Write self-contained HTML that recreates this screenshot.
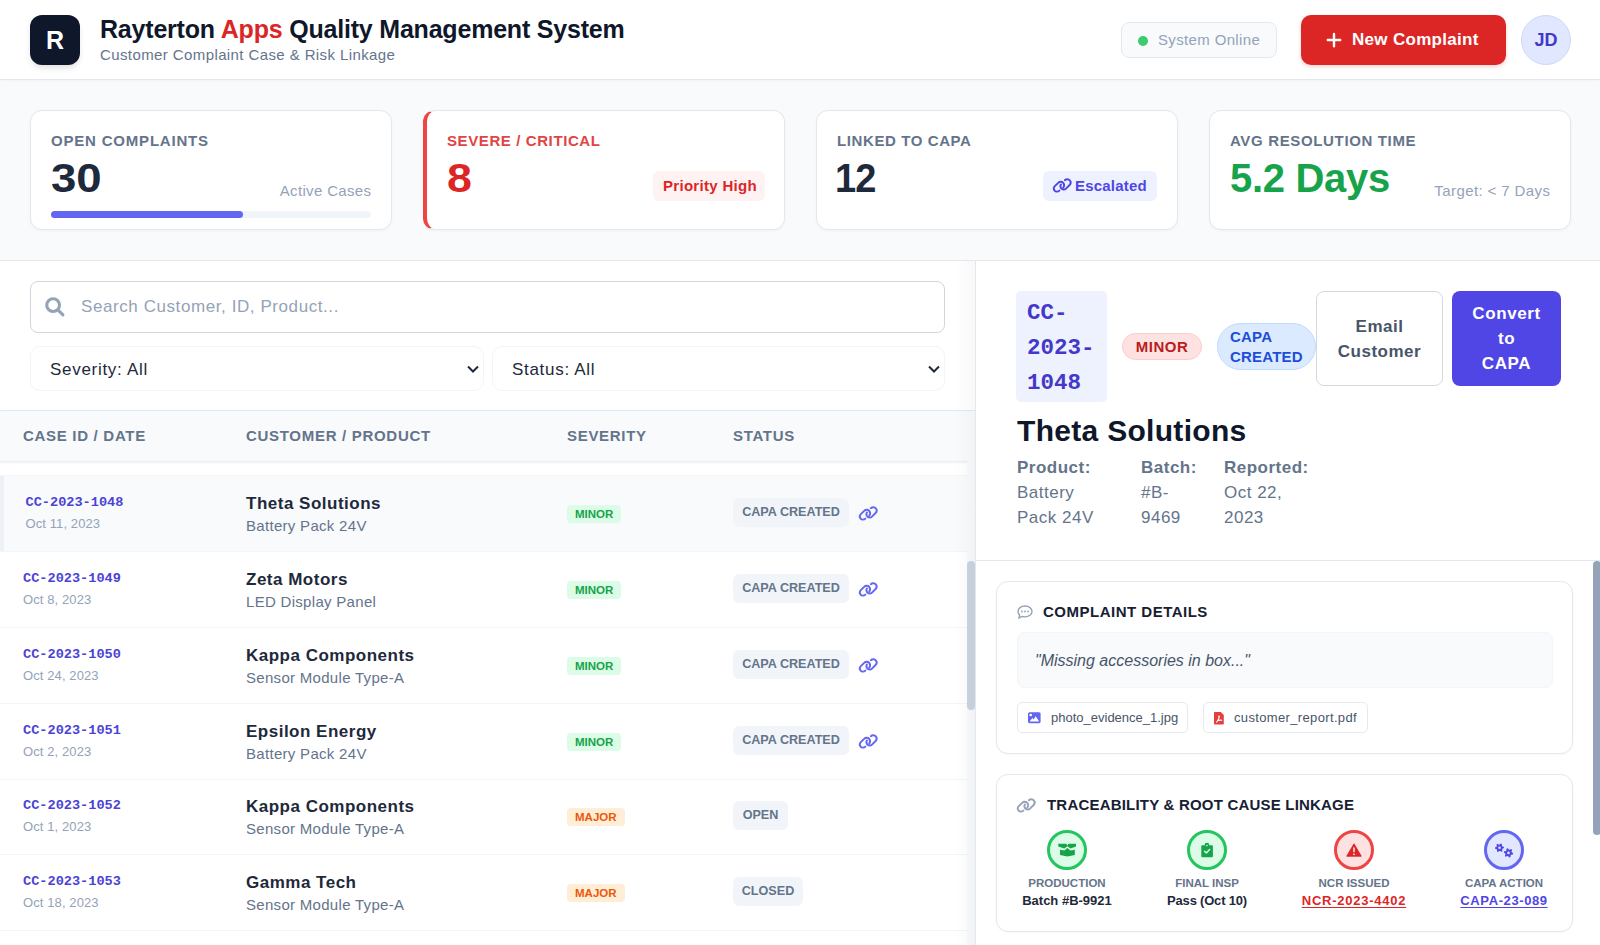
<!DOCTYPE html>
<html><head><meta charset="utf-8">
<style>
*{box-sizing:border-box;margin:0;padding:0}
html,body{width:1600px;height:945px;overflow:hidden}
body{font-family:"Liberation Sans",sans-serif;background:#f8fafc;color:#1e293b;position:relative}
.abs{position:absolute}
div{white-space:nowrap}
/* header */
#hdr{position:absolute;left:0;top:0;width:1600px;height:80px;background:#fff;border-bottom:1px solid #e4e7ec;box-shadow:0 1px 2px rgba(0,0,0,0.03)}
#logo{left:30px;top:15px;width:50px;height:50px;background:#0f172a;border-radius:12px;color:#fff;font-weight:700;font-size:25px;text-align:center;line-height:50px;box-shadow:0 4px 6px -1px rgba(0,0,0,0.12)}
#title{left:100px;top:15px;font-size:25px;font-weight:700;color:#0f172a;letter-spacing:-0.2px}
#title span{color:#dc2626}
#sub{left:100px;top:46px;font-size:15px;color:#64748b;letter-spacing:0.4px}
#online{left:1121px;top:22px;width:156px;height:36px;border:1px solid #e5e8ed;background:#f8fafc;border-radius:8px;font-size:15px;color:#94a3b8}
#online .dot{position:absolute;left:16px;top:13px;width:10px;height:10px;border-radius:50%;background:#3ccb6f}
#online .t{position:absolute;left:36px;top:8px;letter-spacing:0.35px}
#newbtn{left:1301px;top:15px;width:205px;height:50px;background:#dc2626;border-radius:10px;color:#fff;font-weight:700;font-size:17px;box-shadow:0 2px 4px rgba(220,38,38,0.2)}
#newbtn .t{position:absolute;left:51px;top:15px;letter-spacing:0.3px}
#avatar{left:1521px;top:15px;width:50px;height:50px;border-radius:50%;background:#e0e7ff;border:1.5px solid #d2d8f0;color:#4338ca;font-weight:700;font-size:18px;text-align:center;line-height:48px}
/* stats */
.card{position:absolute;top:110px;height:120px;background:#fff;border:1px solid #e4e7ec;border-radius:12px;box-shadow:0 1px 3px rgba(0,0,0,0.04)}
.card .lbl{position:absolute;left:20px;top:21px;font-size:15px;font-weight:700;color:#64748b;letter-spacing:0.8px}
.card .num{position:absolute;left:20px;top:45px;font-size:40px;font-weight:700;color:#1e293b}
.card .rt{position:absolute;right:20px}
.badge{position:absolute;right:20px;top:60px;height:30px;border-radius:6px;font-size:15px;font-weight:700;line-height:30px;padding:0 11px}
/* main */
#left{position:absolute;left:0;top:260px;width:976px;height:685px;background:#fff;border-top:1px solid #e4e7ec;border-right:1px solid #e4e7ec;overflow:hidden}
#search{left:30px;top:20px;width:915px;height:52px;border:1px solid #d0d6de;border-radius:8px;background:#fff}
#search .t{position:absolute;left:50px;top:15px;font-size:17px;color:#94a3b8;letter-spacing:0.58px}
.sel-box{position:absolute;top:85px;height:45px;border:1px solid #f1f5f9;border-radius:10px;background:#fff;font-size:17px;color:#1e293b}
.sel-box .t{position:absolute;left:19px;top:13px;letter-spacing:0.7px}
.sel-box svg{position:absolute;right:4.3px;top:17.6px}
#thead{left:0;top:149px;width:967px;height:52px;background:#f8fafc;border-top:1px solid #e4e7ec;border-bottom:1px solid #eceff3;box-shadow:0 1px 2px rgba(0,0,0,0.06)}
#thead div{position:absolute;top:16px;font-size:15px;font-weight:700;color:#64748b;letter-spacing:0.7px}
.row{position:absolute;left:0;width:967px;height:76px;border-bottom:1px solid #f1f5f9}
.row.sel{background:#f8fafc}
.row.sel:before{content:"";position:absolute;left:0;top:0;width:4px;height:75px;background:#edf1f6}
.row .cid,.row .cdate,.row .cname,.row .cprod{position:absolute;left:23px}
.row.sel .cid,.row.sel .cdate{left:25.5px}
.cid{top:19px;font-family:"Liberation Mono",monospace;font-weight:700;font-size:13.6px;color:#4b43d6}
.cdate{top:40px;font-size:13px;color:#94a3b8;letter-spacing:0.1px}
.row .cname{left:246px;top:18px;font-size:17px;font-weight:700;color:#1e293b;letter-spacing:0.5px}
.row .cprod{left:246px;top:41px;font-size:15px;color:#64748b;letter-spacing:0.3px}
.sev{position:absolute;left:567px;top:29px;height:18px;line-height:18px;padding:0 8px;border-radius:4px;font-size:11.5px;font-weight:700}
.sev.minor{background:#dcfce7;color:#16a34a}
.sev.major{background:#ffedd5;color:#ea580c}
.st{position:absolute;left:733px;top:22px;height:29px;line-height:29px;text-align:center;border-radius:6px;background:#f1f5f9;color:#64748b;font-size:12.6px;font-weight:700}
.lnk{position:absolute;left:852px;top:24px}
#ltrack{left:967px;top:411px;width:8px;height:534px;background:#f8fafc}
#lscroll{left:967px;top:561px;width:8px;height:149px;border-radius:4px;background:#cbd5e1}

#right{position:absolute;left:976px;top:260px;width:624px;height:685px;background:#fff;border-top:1px solid #e4e7ec}
.rp{position:absolute}
#idbox{left:1016px;top:291px;width:91px;height:111px;background:#eef2ff;border-radius:5px;font-family:"Liberation Mono",monospace;font-weight:700;font-size:22.5px;color:#4338ca;line-height:35px;padding:5px 0 0 11px;white-space:normal}
#pminor{left:1122px;top:333px;width:80px;height:27px;border-radius:14px;background:#fee2e2;border:1px solid #fecaca;color:#b91c1c;font-size:15px;font-weight:700;text-align:center;line-height:25px;letter-spacing:0.5px}
#pcapa{left:1217px;top:323px;width:99px;height:47px;border-radius:24px;background:#dbeafe;border:1px solid #bfdbfe;color:#1d4ed8;font-size:15px;font-weight:700;line-height:20px;padding:3px 0 0 12px;letter-spacing:0.2px;white-space:normal}
#bemail{left:1316px;top:291px;width:127px;height:95px;border:1px solid #d3d9e0;border-radius:8px;background:#fff;color:#475569;font-size:17px;font-weight:700;text-align:center;line-height:25px;padding-top:22px;white-space:normal;letter-spacing:0.5px}
#bconv{left:1452px;top:291px;width:109px;height:95px;border-radius:8px;background:#4f46e5;color:#fff;font-size:17px;font-weight:700;text-align:center;line-height:25px;padding-top:10px;white-space:normal;letter-spacing:0.6px}
#cname{left:1017px;top:414px;font-size:30px;font-weight:700;color:#0f172a;letter-spacing:0.3px}
.fld{position:absolute;top:455px;font-size:17px;color:#64748b;line-height:25px;white-space:normal;letter-spacing:0.5px}
.fld b{display:block}
#dhb{left:976px;top:560px;width:624px;height:1px;background:#e2e8f0}
.dcard{position:absolute;left:996px;width:577px;background:#fff;border:1px solid #e4e7ec;border-radius:12px;box-shadow:0 1px 2px rgba(0,0,0,0.03)}
.dtitle{position:absolute;top:20.6px;font-size:15px;font-weight:700;color:#172033;letter-spacing:0.5px}
#quote{left:20px;top:50px;width:536px;height:56px;background:#f8fafc;border:1px solid #f1f5f9;border-radius:8px;font-style:italic;font-size:16px;color:#475569;padding:19px 0 0 17px}
.chip{position:absolute;top:120px;height:31px;border:1px solid #e6eaf0;border-radius:5px;background:#fff;font-size:13px;color:#475569}
.chip .t{position:absolute;top:7px}
#rscroll{left:1593px;top:561px;width:8px;height:274px;border-radius:4px;background:#94a3b8}
.tnode{position:absolute;top:55px;width:40px;height:40px;border-radius:50%;border:3px solid}
.tl1{position:absolute;top:102px;font-size:11.5px;font-weight:700;color:#64748b;text-align:center;width:160px}
.tl2{position:absolute;top:118px;font-size:13px;font-weight:700;color:#1e293b;text-align:center;width:160px;text-underline-offset:2px}
</style></head>
<body>
<div id="hdr">
  <div id="logo" class="abs">R</div>
  <div id="title" class="abs">Rayterton <span>Apps</span> Quality Management System</div>
  <div id="sub" class="abs">Customer Complaint Case &amp; Risk Linkage</div>
  <div id="online" class="abs"><div class="dot"></div><div class="t">System Online</div></div>
  <div id="newbtn" class="abs"><svg class="abs" style="left:25px;top:16.5px" width="16" height="16" viewBox="0 0 16 16"><path d="M8 2v12.2M1.8 8h12.4" stroke="#fff" stroke-width="2.4" stroke-linecap="round"/></svg><div class="t">New Complaint</div></div>
  <div id="avatar" class="abs">JD</div>
</div>

<div class="card" style="left:30px;width:362px">
  <div class="lbl">OPEN COMPLAINTS</div>
  <div class="num" style="transform:scaleX(1.14);transform-origin:0 0">30</div>
  <div class="rt" style="top:71px;font-size:15px;color:#94a3b8;letter-spacing:0.35px;right:19.6px">Active Cases</div>
  <div class="abs" style="left:20px;top:100px;width:320px;height:7px;border-radius:4px;background:#f1f5f9"><div style="width:192px;height:7px;border-radius:4px;background:#6366f1"></div></div>
</div>
<div class="card" style="left:423px;width:362px;border-left:4px solid #ef4444">
  <div class="lbl" style="color:#e04444;letter-spacing:0.6px">SEVERE / CRITICAL</div>
  <div class="num" style="color:#dc2626;left:20px;transform:scaleX(1.12);transform-origin:0 0">8</div>
  <div class="badge" style="background:#fef2f2;color:#dc2626;letter-spacing:0.3px;padding:0 10px 0 10px;width:112px;right:19px">Priority High</div>
</div>
<div class="card" style="left:816px;width:362px">
  <div class="lbl" style="letter-spacing:0.6px">LINKED TO CAPA</div>
  <div class="num" style="left:18px;letter-spacing:-1px;transform:scaleX(0.95);transform-origin:0 0">12</div>
  <div class="badge" style="background:#eef2ff;color:#4f46e5;padding-left:32px;width:114px;letter-spacing:0.2px"><svg class="abs" style="left:3px;top:1px" width="32" height="26" viewBox="0 0 32 26"><g fill="none" stroke="#4f46e5" stroke-width="1.9" stroke-linecap="round"><path d="M13.4 18.6C11.8 20.2 9.6 19.8 8.6 18.6C7.6 17.4 7.6 15.4 8.8 14.2L12.2 10.8C13.6 9.4 16 9.4 17.2 10.8C18.4 12.2 18.2 14.4 17.2 15.8"/><path d="M18.8 8.2C20.4 6.8 22.6 7 23.8 8.4C25 9.8 24.8 11.8 23.6 13L20 16.6C18.6 18 16.2 17.8 15.2 16.4C14.2 15 14.2 13.4 15 12.4"/></g></svg>Escalated</div>
</div>
<div class="card" style="left:1209px;width:362px">
  <div class="lbl" style="letter-spacing:0.65px">AVG RESOLUTION TIME</div>
  <div class="num" style="color:#16a34a;letter-spacing:-0.3px">5.2 Days</div>
  <div class="rt" style="top:71px;font-size:15px;color:#94a3b8;letter-spacing:0.4px;right:19.6px">Target: &lt; 7 Days</div>
</div>

<div id="left">
  <div id="search" class="abs"><svg class="abs" style="left:13px;top:14px" width="22" height="22" viewBox="0 0 20 20"><circle cx="8.3" cy="8.3" r="5.8" fill="none" stroke="#94a3b8" stroke-width="2.8"/><path d="M12.6 12.6l4.6 4.6" stroke="#94a3b8" stroke-width="2.8" stroke-linecap="round"/></svg><div class="t">Search Customer, ID, Product...</div></div>
  <div class="sel-box" style="left:30px;width:454px"><div class="t">Severity: All</div><svg width="12" height="8" viewBox="0 0 12 8"><path d="M1 1.5l5 5 5-5" fill="none" stroke="#1e293b" stroke-width="2"/></svg></div>
  <div class="sel-box" style="left:492px;width:453px"><div class="t">Status: All</div><svg width="12" height="8" viewBox="0 0 12 8"><path d="M1 1.5l5 5 5-5" fill="none" stroke="#1e293b" stroke-width="2"/></svg></div>
  <div id="thead" class="abs"><div style="left:23px">CASE ID / DATE</div><div style="left:246px">CUSTOMER / PRODUCT</div><div style="left:567px">SEVERITY</div><div style="left:733px">STATUS</div></div>
</div>
<div id="rows" style="position:absolute;left:0;top:0">
<div class="row sel" style="top:476px"><div class="cid">CC-2023-1048</div><div class="cdate">Oct 11, 2023</div><div class="cname">Theta Solutions</div><div class="cprod">Battery Pack 24V</div><div class="sev minor">MINOR</div><div class="st" style="width:116px">CAPA CREATED</div><svg class="lnk" width="32" height="26" viewBox="0 0 32 26"><g fill="none" stroke="#6366f1" stroke-width="1.9" stroke-linecap="round"><path d="M13.4 18.6C11.8 20.2 9.6 19.8 8.6 18.6C7.6 17.4 7.6 15.4 8.8 14.2L12.2 10.8C13.6 9.4 16 9.4 17.2 10.8C18.4 12.2 18.2 14.4 17.2 15.8"/><path d="M18.8 8.2C20.4 6.8 22.6 7 23.8 8.4C25 9.8 24.8 11.8 23.6 13L20 16.6C18.6 18 16.2 17.8 15.2 16.4C14.2 15 14.2 13.4 15 12.4"/></g></svg></div>
<div class="row" style="top:552.0px"><div class="cid">CC-2023-1049</div><div class="cdate">Oct 8, 2023</div><div class="cname">Zeta Motors</div><div class="cprod">LED Display Panel</div><div class="sev minor">MINOR</div><div class="st" style="width:116px">CAPA CREATED</div><svg class="lnk" width="32" height="26" viewBox="0 0 32 26"><g fill="none" stroke="#6366f1" stroke-width="1.9" stroke-linecap="round"><path d="M13.4 18.6C11.8 20.2 9.6 19.8 8.6 18.6C7.6 17.4 7.6 15.4 8.8 14.2L12.2 10.8C13.6 9.4 16 9.4 17.2 10.8C18.4 12.2 18.2 14.4 17.2 15.8"/><path d="M18.8 8.2C20.4 6.8 22.6 7 23.8 8.4C25 9.8 24.8 11.8 23.6 13L20 16.6C18.6 18 16.2 17.8 15.2 16.4C14.2 15 14.2 13.4 15 12.4"/></g></svg></div>
<div class="row" style="top:627.75px"><div class="cid">CC-2023-1050</div><div class="cdate">Oct 24, 2023</div><div class="cname">Kappa Components</div><div class="cprod">Sensor Module Type-A</div><div class="sev minor">MINOR</div><div class="st" style="width:116px">CAPA CREATED</div><svg class="lnk" width="32" height="26" viewBox="0 0 32 26"><g fill="none" stroke="#6366f1" stroke-width="1.9" stroke-linecap="round"><path d="M13.4 18.6C11.8 20.2 9.6 19.8 8.6 18.6C7.6 17.4 7.6 15.4 8.8 14.2L12.2 10.8C13.6 9.4 16 9.4 17.2 10.8C18.4 12.2 18.2 14.4 17.2 15.8"/><path d="M18.8 8.2C20.4 6.8 22.6 7 23.8 8.4C25 9.8 24.8 11.8 23.6 13L20 16.6C18.6 18 16.2 17.8 15.2 16.4C14.2 15 14.2 13.4 15 12.4"/></g></svg></div>
<div class="row" style="top:703.5px"><div class="cid">CC-2023-1051</div><div class="cdate">Oct 2, 2023</div><div class="cname">Epsilon Energy</div><div class="cprod">Battery Pack 24V</div><div class="sev minor">MINOR</div><div class="st" style="width:116px">CAPA CREATED</div><svg class="lnk" width="32" height="26" viewBox="0 0 32 26"><g fill="none" stroke="#6366f1" stroke-width="1.9" stroke-linecap="round"><path d="M13.4 18.6C11.8 20.2 9.6 19.8 8.6 18.6C7.6 17.4 7.6 15.4 8.8 14.2L12.2 10.8C13.6 9.4 16 9.4 17.2 10.8C18.4 12.2 18.2 14.4 17.2 15.8"/><path d="M18.8 8.2C20.4 6.8 22.6 7 23.8 8.4C25 9.8 24.8 11.8 23.6 13L20 16.6C18.6 18 16.2 17.8 15.2 16.4C14.2 15 14.2 13.4 15 12.4"/></g></svg></div>
<div class="row" style="top:779.25px"><div class="cid">CC-2023-1052</div><div class="cdate">Oct 1, 2023</div><div class="cname">Kappa Components</div><div class="cprod">Sensor Module Type-A</div><div class="sev major">MAJOR</div><div class="st" style="width:55px">OPEN</div></div>
<div class="row" style="top:855.0px"><div class="cid">CC-2023-1053</div><div class="cdate">Oct 18, 2023</div><div class="cname">Gamma Tech</div><div class="cprod">Sensor Module Type-A</div><div class="sev major">MAJOR</div><div class="st" style="width:70px">CLOSED</div></div>
<div class="row" style="top:930.75px"><div class="cid">CC-2023-1054</div><div class="cdate">Oct 5, 2023</div><div class="cname">Beta Industries</div><div class="cprod">LED Display Panel</div><div class="sev minor">MINOR</div><div class="st" style="width:55px">OPEN</div></div>
</div>
<div id="ltrack" class="abs"></div><div class="abs" style="left:0;top:475px;width:967px;height:1px;background:#f1f5f9"></div><div id="lscroll" class="abs"></div><div class="abs" style="left:0;top:410px;width:975px;height:1px;background:#e2e8f0"></div>

<div id="right"></div><div class="abs" style="left:955px;top:261px;width:20px;height:684px;background:linear-gradient(to right,rgba(15,23,42,0),rgba(15,23,42,0.03))"></div>
<div id="idbox" class="rp">CC-<br>2023-<br>1048</div>
<div id="pminor" class="rp">MINOR</div>
<div id="pcapa" class="rp">CAPA<br>CREATED</div>
<div id="bemail" class="rp">Email<br>Customer</div>
<div id="bconv" class="rp">Convert<br>to<br>CAPA</div>
<div id="cname" class="rp">Theta Solutions</div>
<div class="fld" style="left:1017px"><b>Product:</b>Battery<br>Pack 24V</div>
<div class="fld" style="left:1141px"><b>Batch:</b>#B-<br>9469</div>
<div class="fld" style="left:1224px"><b>Reported:</b>Oct 22,<br>2023</div>
<div id="dhb" class="rp"></div>
<div class="dcard" style="top:581px;height:173px">
  <svg class="abs" style="left:20px;top:23px" width="16" height="14" viewBox="0 0 16 14"><path d="M8 1C4.1 1 1 3.5 1 6.5c0 1.3.6 2.5 1.6 3.4L2 13l3.2-1.6c.9.3 1.8.5 2.8.5 3.9 0 7-2.5 7-5.5S11.9 1 8 1z" fill="none" stroke="#94a3b8" stroke-width="1.4"/><circle cx="5" cy="6.5" r=".9" fill="#94a3b8"/><circle cx="8" cy="6.5" r=".9" fill="#94a3b8"/><circle cx="11" cy="6.5" r=".9" fill="#94a3b8"/></svg>
  <div class="dtitle" style="left:46px">COMPLAINT DETAILS</div>
  <div id="quote" class="abs">"Missing accessories in box..."</div>
  <div class="chip" style="left:20px;width:171px"><svg class="abs" style="left:10px;top:9px" width="13" height="12" viewBox="0 0 13 12"><rect x="0" y="0.2" width="12.6" height="11" rx="1.6" fill="#6366f1"/><circle cx="2.7" cy="3" r="1.3" fill="#fff"/><path d="M1.6 9.6L4.4 6.1L5.6 7.4L7.7 4.2L11.2 9.6Z" fill="#fff"/></svg><div class="t" style="left:33px">photo_evidence_1.jpg</div></div>
  <div class="chip" style="left:206px;width:165px"><svg class="abs" style="left:10px;top:8.6px" width="11" height="13" viewBox="0 0 11 13"><path d="M0 1C0 .4.4 0 1 0H6.8L9.8 3V11.4C9.8 12 9.4 12.4 8.8 12.4H1C.4 12.4 0 12 0 11.4Z" fill="#e53e3e"/><path d="M2.6 10.2C3.8 9 5 7.6 5.2 4.8M4.6 8.4C5.8 8.1 7 8 7.8 8.2" fill="none" stroke="#fff" stroke-width="1.1" stroke-linecap="round"/><circle cx="5" cy="4.4" r="0.8" fill="#fff"/></svg><div class="t" style="left:30px;letter-spacing:0.35px">customer_report.pdf</div></div>
</div>
<div class="dcard" style="top:774px;height:158px">
  <svg class="abs" style="left:13px;top:17px" width="32" height="26" viewBox="0 0 32 26"><g fill="none" stroke="#94a3b8" stroke-width="1.9" stroke-linecap="round"><path d="M13.4 18.6C11.8 20.2 9.6 19.8 8.6 18.6C7.6 17.4 7.6 15.4 8.8 14.2L12.2 10.8C13.6 9.4 16 9.4 17.2 10.8C18.4 12.2 18.2 14.4 17.2 15.8"/><path d="M18.8 8.2C20.4 6.8 22.6 7 23.8 8.4C25 9.8 24.8 11.8 23.6 13L20 16.6C18.6 18 16.2 17.8 15.2 16.4C14.2 15 14.2 13.4 15 12.4"/></g></svg>
  <div class="dtitle" style="left:50px;letter-spacing:0.2px">TRACEABILITY &amp; ROOT CAUSE LINKAGE</div>
  <div class="tnode" style="left:50px;border-color:#22c55e;background:#dcfce7"></div>
  <div class="tnode" style="left:190px;border-color:#22c55e;background:#dcfce7"></div>
  <div class="tnode" style="left:337px;border-color:#ef4444;background:#fee2e2"></div>
  <div class="tnode" style="left:487px;border-color:#6366f1;background:#e0e7ff"></div>
  <svg class="abs" style="left:48px;top:53px" width="45" height="44" viewBox="0 0 45 44"><g fill="#16a34a"><path d="M13.3 15.8H21.3L22.4 17.6L23.5 15.8H31V18.6L25.5 20.4L22.4 18.2L19.3 20.4L13.3 18.6Z"/><path d="M15 21.8L19.3 22.4L22.4 19.9L25.5 22.4L29.8 21.8V26.9L22.4 28.6L15 26.9Z"/></g></svg><svg class="abs" style="left:188px;top:53px" width="45" height="44" viewBox="0 0 45 44"><rect x="16.3" y="17.2" width="11.6" height="12.1" rx="1" fill="#16a34a"/><circle cx="21.9" cy="17" r="2.3" fill="#16a34a"/><circle cx="21.9" cy="17.6" r="0.8" fill="#dcfce7"/><path d="M19.6 23.3L21.3 25L24.6 21.5" fill="none" stroke="#dcfce7" stroke-width="1.5" stroke-linecap="round" stroke-linejoin="round"/></svg><svg class="abs" style="left:335px;top:53px" width="45" height="44" viewBox="0 0 45 44"><path d="M22 15.8L29.3 28.2H14.7Z" fill="#dc2626" stroke="#dc2626" stroke-width="0.9" stroke-linejoin="round"/><rect x="21.2" y="19.5" width="1.6" height="4.6" fill="#fee2e2"/><rect x="21.2" y="25.5" width="1.6" height="1.6" fill="#fee2e2"/></svg><svg class="abs" style="left:485px;top:53px" width="45" height="44" viewBox="0 0 45 44"><g fill="#4f46e5" fill-rule="evenodd"><path d="M21.91 18.91 L21.99 20.08 L20.53 20.82 L20.17 21.57 L20.48 23.17 L19.51 23.83 L18.14 22.94 L17.30 22.99 L16.07 24.07 L15.01 23.55 L15.10 21.92 L14.64 21.23 L13.09 20.69 L13.01 19.52 L14.47 18.78 L14.83 18.03 L14.52 16.43 L15.49 15.77 L16.86 16.66 L17.70 16.61 L18.93 15.53 L19.99 16.05 L19.90 17.68 L20.36 18.37 Z M18.80 19.80 A1.3 1.3 0 1 0 16.20 19.80 A1.3 1.3 0 1 0 18.80 19.80 Z"/><path d="M31.18 25.37 L30.90 26.56 L29.18 26.83 L28.59 27.45 L28.43 29.18 L27.26 29.54 L26.17 28.18 L25.33 27.99 L23.76 28.72 L22.86 27.88 L23.49 26.26 L23.24 25.43 L21.82 24.43 L22.10 23.24 L23.82 22.97 L24.41 22.35 L24.57 20.62 L25.74 20.26 L26.83 21.62 L27.67 21.81 L29.24 21.08 L30.14 21.92 L29.51 23.54 L29.76 24.37 Z M27.80 24.90 A1.3 1.3 0 1 0 25.20 24.90 A1.3 1.3 0 1 0 27.80 24.90 Z"/></g></svg>
  <div class="tl1" style="left:-10px">PRODUCTION</div><div class="tl2" style="left:-10px">Batch #B-9921</div>
  <div class="tl1" style="left:130px">FINAL INSP</div><div class="tl2" style="left:130px;letter-spacing:-0.2px">Pass (Oct 10)</div>
  <div class="tl1" style="left:277px">NCR ISSUED</div><div class="tl2" style="left:277px;color:#dc2626;text-decoration:underline;letter-spacing:0.75px">NCR-2023-4402</div>
  <div class="tl1" style="left:427px">CAPA ACTION</div><div class="tl2" style="left:427px;color:#4f46e5;text-decoration:underline;letter-spacing:0.6px">CAPA-23-089</div>
</div>
<div id="rscroll" class="rp"></div>
</body></html>
